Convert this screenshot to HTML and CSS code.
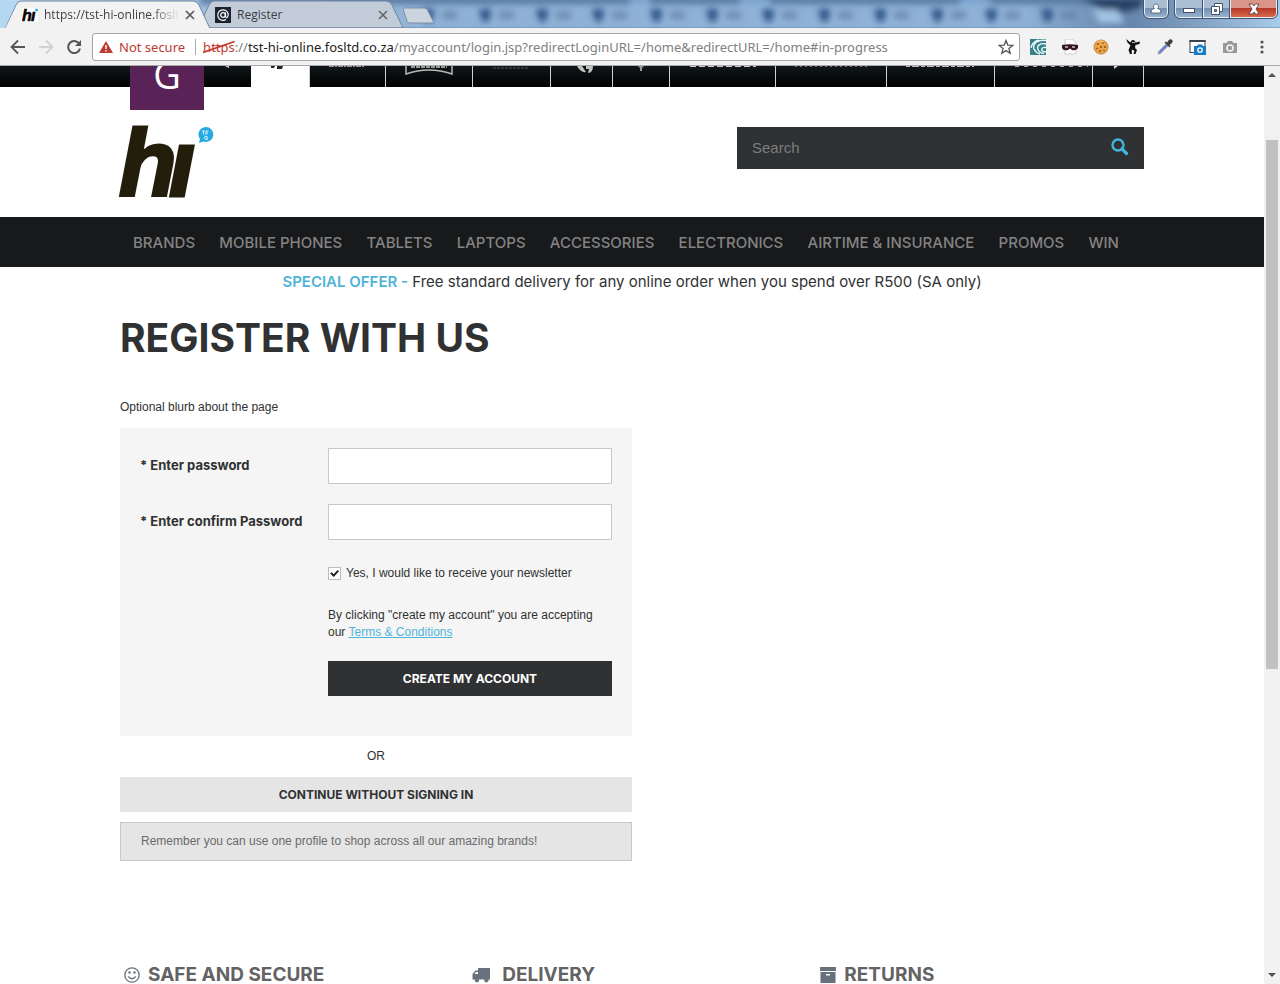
FILE: index.html
```html
<!DOCTYPE html>
<html lang="en">
<head>
<meta charset="utf-8">
<title>Register</title>
<link rel="stylesheet" href="styles.css">
</head>
<body>
<div class="titlebar">
  <svg class="glass" viewBox="0 0 1280 28" preserveAspectRatio="none" aria-hidden="true">
    <defs>
      <linearGradient id="sky" x1="0" x2="1" y1="0" y2="0">
        <stop offset="0" stop-color="#b9dcf5"/><stop offset=".15" stop-color="#a0bfe0"/><stop offset=".35" stop-color="#8fb1d6"/>
        <stop offset=".8" stop-color="#8fb1d6"/><stop offset=".88" stop-color="#6485aa"/><stop offset=".92" stop-color="#7897b9"/><stop offset="1" stop-color="#a8cbe9"/>
      </linearGradient>
      <filter id="soft" x="-20%" y="-50%" width="140%" height="200%"><feGaussianBlur stdDeviation="3"/></filter>
      <g id="ghost"><path d="M0 9h12v6l-3 7H4l-3-7z" fill="#30598b"/><path d="M20 11h15v8H20z" fill="#617fa2" opacity=".7"/></g>
    </defs>
    <rect width="1280" height="28" fill="url(#sky)"/>
    <g filter="url(#soft)">
      <path d="M200-4h960v8H200z" fill="#55779f"/>
      <path d="M630-2h20v6h-20zM740-2h30v6h-30zM960-2h30v6h-30z" fill="#7fa9d6"/>
      <path d="M1080-2h62v9l-28 8z" fill="#253f63"/>
      <use href="#ghost" x="422"/><use href="#ghost" x="479"/><use href="#ghost" x="536"/><use href="#ghost" x="592"/><use href="#ghost" x="650"/><use href="#ghost" x="706"/><use href="#ghost" x="762"/><use href="#ghost" x="818"/><use href="#ghost" x="874"/><use href="#ghost" x="931"/><use href="#ghost" x="985"/><use href="#ghost" x="1041"/>
      <path d="M1092 10h25l8 13h-25z" fill="#a4c4e5"/>
    </g>
    <path d="M198 28 209 5q2-4 5-4h172q4 0 6 4l11 23z" fill="#c2ccd8" stroke="#70859f"/>
    <path d="M0 28h5L16 5q2-4 5-4h172q4 0 6 4l11 23.500H0z" fill="#f2f2f2" stroke="#70859f"/>
    <path d="M0 28 5 28 17 1H0z" fill="#b4d7f2"/>
    <path d="m403 9 4 12q1 2 3 2h24l-6-12q-1-3-4-3h-19q-2 0-2 1z" fill="#ccd4dd" stroke="#7b8fa8"/>
    <path d="M210 28h1070" stroke="#6a83a1"/>
  </svg>
  <div class="tabs">
    <div class="tab">
      <svg width="16" height="14" viewBox="0 0 16 14" aria-hidden="true"><rect width="16" height="14" fill="#fff"/><g font-family="Liberation Sans" font-weight="bold" font-style="italic" font-size="16" stroke="#111" stroke-width=".6"><text x="0" y="13">h</text><text x="9" y="13">ı</text></g><circle cx="14.500" cy="2" r="1.500" fill="#2bb0e4"/></svg>
      <span class="tab-title faded">https://tst-hi-online.fosltd</span>
      <button class="plain" aria-label="Close tab"><svg width="10" height="10" viewBox="0 0 10 10"><path d="m1 1 8 8M9 1 1 9" stroke="#555" stroke-width="1.600"/></svg></button>
    </div>
    <div class="tab">
      <svg width="16" height="16" viewBox="0 0 16 16" aria-hidden="true"><rect width="16" height="16" fill="#1b2230"/><circle cx="8" cy="8" r="2.300" fill="none" stroke="#fff" stroke-width="1.300"/><path d="M10.500 5.500v4q.3 1.500 1.500 1 1.500-1 1.200-3.500A5.300 5.300 0 1 0 11 12.500" fill="none" stroke="#fff" stroke-width="1.200"/></svg>
      <span class="tab-title">Register</span>
      <button class="plain" aria-label="Close tab"><svg width="10" height="10" viewBox="0 0 10 10"><path d="m1 1 8 8M9 1 1 9" stroke="#666" stroke-width="1.600"/></svg></button>
    </div>
  </div>
  <div class="window-controls">
    <button class="wc profile" aria-label="Profile"><svg width="12" height="12" viewBox="0 0 12 12"><path d="M6 1a2.500 2.500 0 0 1 1.500 4.500c2.500.5 3.500 1.500 3.500 4.500H1c0-3 1-4 3.500-4.500A2.500 2.500 0 0 1 6 1z" fill="#fff" stroke="#3e5673" stroke-width=".8"/></svg></button>
    <div class="wc-group">
      <button class="wc min" aria-label="Minimize"><svg width="14" height="10" viewBox="0 0 14 10"><rect x="1.500" y="4.500" width="11" height="4" fill="#fff" stroke="#455268"/></svg></button>
      <button class="wc max" aria-label="Restore"><svg width="14" height="14" viewBox="0 0 14 14"><path d="M4.500 1.500h8v8h-8z" fill="#fff" stroke="#455268"/><path d="M1.500 4.500h8v8h-8z" fill="#fff" stroke="#455268"/><path d="M4.500 7.500h2v2h-2z" fill="#7e99b8" stroke="#455268"/></svg></button>
      <button class="wc close" aria-label="Close"><svg width="14" height="12" viewBox="0 0 14 12"><path d="m2 1h3.500L7 3l1.500-2H12L9 6l3 5H8.500L7 9l-1.500 2H2l3-5z" fill="#fff" stroke="#54333a" stroke-width=".8"/></svg></button>
    </div>
  </div>
</div>

<div class="toolbar">
  <div class="nav-buttons">
    <button class="plain" aria-label="Back"><svg width="16" height="16" viewBox="0 0 16 16"><path d="M15 8H2M8 1.500 1.500 8 8 14.500" fill="none" stroke="#555" stroke-width="1.800"/></svg></button>
    <button class="plain" aria-label="Forward"><svg width="16" height="16" viewBox="0 0 16 16"><path d="M1 8h13M8 1.500 14.500 8 8 14.500" fill="none" stroke="#d2d2d2" stroke-width="1.800"/></svg></button>
    <button class="plain" aria-label="Reload"><svg width="16" height="16" viewBox="0 0 16 16"><path d="M13.200 4.800A6 6 0 1 0 14 9.500" fill="none" stroke="#555" stroke-width="2"/><path d="M15 1v6H9z" fill="#555"/></svg></button>
  </div>
  <div class="address" role="textbox" aria-label="Address">
    <svg width="14" height="12" viewBox="0 0 14 12" aria-hidden="true"><path d="M7 0l7 12H0z" fill="#bd3b30"/><path d="M6.300 4h1.400v4H6.300zM6.300 9h1.400v1.400H6.300z" fill="#fff"/></svg>
    <span class="not-secure">Not secure</span>
    <span class="url"><span class="scheme">https<svg class="strike" viewBox="0 0 32 14" preserveAspectRatio="none" aria-hidden="true"><path d="M0 12.500 32 1.500" stroke="#c5392d" stroke-width="1.800"/></svg></span>://<span class="host">tst-hi-online.fosltd.co.za</span>/myaccount/login.jsp?redirectLoginURL=/home&amp;redirectURL=/home#in-progress</span>
    <button class="plain" aria-label="Bookmark"><svg width="16" height="16" viewBox="0 0 16 16"><path d="m8 1.500 1.800 4.600 4.900.3-3.800 3.100 1.300 4.800L8 11.600l-4.200 2.700 1.300-4.800-3.800-3.100 4.900-.3z" fill="none" stroke="#555" stroke-width="1.300"/></svg></button>
  </div>
  <div class="extensions">
    <svg width="16" height="16" viewBox="0 0 16 16"><rect width="16" height="16" fill="#36818c"/><path d="M16 1.500C8 0 2 5 4 10q2 4 6 5M16 5C10 3.500 6.500 7 8 10.500q1.500 3.500 6 4M16 8.500c-3-.5-5 1-4 3q1 1.500 4 1.500M9 1Q2 3 1 9" fill="none" stroke="#eef8fa" stroke-width="1.400"/></svg>
    <svg width="16" height="16" viewBox="0 0 16 16"><path d="M3 0h7l4 4v11H3z" fill="#fff" stroke="#ccc"/><path d="M0 6q8-1.500 16 0v3q-2 3-6 2L8 9.500 6 11q-5 1-6-2z" fill="#35171c"/><path d="M3 8h3M10 8h3" stroke="#d9bcc0" stroke-width="1.600"/></svg>
    <svg width="16" height="16" viewBox="0 0 16 16"><circle cx="8" cy="8" r="7" fill="#e9a348" stroke="#c98138"/><path d="M4 3q4-2 7 0" stroke="#f4bd70" stroke-width="1.500" fill="none"/><g fill="#7d491f"><circle cx="5" cy="5" r=".9"/><circle cx="10" cy="4" r=".8"/><circle cx="8" cy="8" r=".9"/><circle cx="4" cy="9.500" r=".8"/><circle cx="12" cy="8" r=".9"/><circle cx="7" cy="12" r=".9"/><circle cx="11" cy="11.500" r=".8"/></g></svg>
    <svg width="16" height="16" viewBox="0 0 16 16"><path d="m1 0 4.500 3.500q.5-3 3-2.500 2 .5 2 2.500l4.500-1-.5 2.500-4 1-.5 3 2 2-1.500 4H8.500l1-3-2-1.500-1 1.500.5 3H5l-1.500-4 2-4.500-3-3z" fill="#111"/><path d="M7 3.500h3" stroke="#e5e5e5" stroke-width=".8"/></svg>
    <svg width="16" height="16" viewBox="0 0 16 16"><path d="M1 15q0-2 1.500-3.500L9 5l2 2-6.500 6.500Q3 15 1 15z" fill="#7183d2" stroke="#9ba3b4"/><path d="m7.500 3.500 1-1 1.500 1L12 .8q2-1.300 3.200.2 1 1.500-.2 3L12.500 6l1 1.500-1 1z" fill="#3e4045"/></svg>
    <svg width="18" height="16" viewBox="0 0 18 16"><rect x="1" y="1.500" width="15" height="12" fill="#fff" stroke="#39434b"/><path d="M.5 1h16v2H.5z" fill="#39434b"/><path d="M5 7h3l1-1.500h4L14 7h3v9H5z" fill="#167bc8"/><circle cx="11" cy="11" r="2.200" fill="none" stroke="#fff" stroke-width="1.300"/></svg>
    <svg width="16" height="16" viewBox="0 0 16 16"><path d="M1 4h3.500L6 2h4l1.500 2H15v10H1z" fill="#999"/><circle cx="8" cy="9" r="3" fill="none" stroke="#f2f2f2" stroke-width="1.600"/></svg>
    <button class="plain" aria-label="Menu"><svg width="16" height="16" viewBox="0 0 16 16"><g fill="#555"><circle cx="8" cy="3" r="1.600"/><circle cx="8" cy="8" r="1.600"/><circle cx="8" cy="13" r="1.600"/></g></svg></button>
  </div>
</div>

<div class="viewport">
  <div class="page">
    <div class="brand-strip">
      <div class="container brand-row">
        <div class="group-tile">G</div>
        <div class="brand-cells">
          <div class="cell c-arrow"><svg width="58" height="21" viewBox="0 0 58 21"><path d="m32 0 4 2V0z" fill="#ddd"/></svg></div>
          <div class="cell c-active"><svg width="58" height="21" viewBox="0 0 58 21"><path d="M20 0h4l-1 2h-3zM26 0h6l-1 3h-5z" fill="#222"/></svg></div>
          <div class="cell c-76"><svg width="75" height="21" viewBox="0 0 75 21"><path d="M19 .5h36" stroke="#999" stroke-width="1" stroke-dasharray="5 1 2 1"/></svg></div>
          <div class="cell c-87"><svg width="86" height="21" viewBox="0 0 86 21"><path d="M20 0v8q23-8 46 0V0" fill="none" stroke="#b8b8b8" stroke-width="1.500"/><path d="M25 1h36" stroke="#999" stroke-width="2" stroke-dasharray="4 1"/></svg></div>
          <div class="cell c-78"><svg width="77" height="21" viewBox="0 0 77 21"><path d="M20 2h36" stroke="#555" stroke-width="1" stroke-dasharray="3 1"/></svg></div>
          <div class="cell c-62"><svg width="61" height="21" viewBox="0 0 61 21"><path d="M26 0h5l4 6q-5 1-9-6zM35 0h7q0 7-5 7l1-4h-3z" fill="#c2c2c2"/></svg></div>
          <div class="cell c-57"><svg width="56" height="21" viewBox="0 0 56 21"><path d="M25 0h6l-2 2v3h-2V2z" fill="#999"/></svg></div>
          <div class="cell c-106"><svg width="105" height="21" viewBox="0 0 105 21"><path d="M20 .5h66" stroke="#ccc" stroke-width="1" stroke-dasharray="6 3"/></svg></div>
          <div class="cell c-111"><svg width="110" height="21" viewBox="0 0 110 21"><path d="M19 .5h72" stroke="#777" stroke-width="1" stroke-dasharray="2 3"/></svg></div>
          <div class="cell c-108"><svg width="107" height="21" viewBox="0 0 107 21"><path d="M19 .5h68" stroke="#bbb" stroke-width="1" stroke-dasharray="4 2 7 2"/></svg></div>
          <div class="cell c-98"><svg width="97" height="21" viewBox="0 0 97 21"><path d="M20 .5h73" stroke="#aaa" stroke-width="1" stroke-dasharray="4 5"/></svg></div>
          <div class="cell c-51"><svg width="50" height="21" viewBox="0 0 50 21"><path d="M21 0h4l-4 3z" fill="#ddd"/></svg></div>
        </div>
      </div>
    </div>

    <header class="container site-header">
      <a class="logo" href="#" aria-label="hi home">
        <svg width="94" height="70" viewBox="0 0 94 70">
          <g font-family="Liberation Sans" font-weight="bold" font-style="italic" font-size="94" fill="#231e0c" stroke="#231e0c" stroke-width="3"><text x="-1" y="68.500">h</text><text x="49" y="68.500">ı</text></g>
          <path d="M85.500 0a7.500 7.500 0 1 1-2 14.600L79 16l1-4A7.500 7.500 0 0 1 85.500 0z" fill="#27aae1"/>
          <path d="M82 4h3M83.500 4v3.500M86 8V4h2.500M86 6h2M87.500 9.500q-3-1-3.500 1.500.5 2 3.500 1.300V11H86" fill="none" stroke="#fff" stroke-width=".8"/>
        </svg>
      </a>
      <form class="search" role="search">
        <input type="text" aria-label="Search" placeholder="Search">
        <button class="plain" type="button" aria-label="Submit search"><svg width="18" height="22" viewBox="0 0 18 22"><circle cx="7" cy="8" r="5.500" fill="none" stroke="#41b4dc" stroke-width="2.400"/><path d="m11 12 4.500 4.500" stroke="#41b4dc" stroke-width="3.200" stroke-linecap="round"/></svg></button>
      </form>
    </header>

    <nav class="site-nav">
      <div class="container nav-links">
        <a href="#">BRANDS</a><a href="#">MOBILE PHONES</a><a href="#">TABLETS</a><a href="#">LAPTOPS</a><a href="#">ACCESSORIES</a><a href="#">ELECTRONICS</a><a href="#">AIRTIME &amp; INSURANCE</a><a href="#">PROMOS</a><a href="#">WIN</a>
      </div>
    </nav>

    <p class="promo"><strong>SPECIAL OFFER -</strong> Free standard delivery for any online order when you spend over R500 (SA only)</p>

    <main class="container">
      <h1>REGISTER WITH US</h1>
      <p class="blurb">Optional blurb about the page</p>
      <div class="column">
        <form class="panel">
          <div class="field"><label for="pw">* Enter password</label><input id="pw" type="password"></div>
          <div class="field"><label for="pw2">* Enter confirm Password</label><input id="pw2" type="password"></div>
          <div class="actions">
            <label class="check"><input type="checkbox" checked>Yes, I would like to receive your newsletter</label>
            <p class="terms">By clicking "create my account" you are accepting our <a href="#">Terms &amp; Conditions</a></p>
            <button class="btn dark" type="button">CREATE MY ACCOUNT</button>
          </div>
        </form>
        <p class="or">OR</p>
        <button class="btn light" type="button">CONTINUE WITHOUT SIGNING IN</button>
        <p class="note">Remember you can use one profile to shop across all our amazing brands!</p>
      </div>
    </main>

    <footer class="container site-footer">
      <h2><svg width="16" height="16" viewBox="0 0 16 16" aria-hidden="true"><circle cx="8" cy="8" r="7.200" fill="none" stroke="#68717c" stroke-width="1.300"/><circle cx="5.500" cy="5.500" r="1.200" fill="#68717c"/><circle cx="10.500" cy="5.500" r="1.200" fill="#68717c"/><path d="M4.300 9.500q3.700 4.500 7.400 0" fill="none" stroke="#68717c" stroke-width="1.300"/></svg>SAFE AND SECURE</h2>
      <h2><svg width="22" height="16" viewBox="0 0 22 16" aria-hidden="true"><path d="M6 1h12v11.500h-1.500a2.200 2.200 0 1 1-4.200 0H7a2.200 2.200 0 1 1-4.200 0H.5V7l3-3.500H6zM2.500 7H6V5H4z" fill="#68717c" fill-rule="evenodd"/></svg>DELIVERY</h2>
      <h2><svg width="16" height="16" viewBox="0 0 16 16" aria-hidden="true"><path d="M0 0h16v4H0zM.5 5h15v11H.500zM6 7v1.500h4V7z" fill="#68717c" fill-rule="evenodd"/></svg>RETURNS</h2>
    </footer>
  </div>
  <div class="scrollbar" aria-hidden="true">
    <svg width="8" height="18" viewBox="0 0 8 18"><path d="m0 11 4-4 4 4z" fill="#505050"/></svg>
    <div class="track"><div class="thumb"></div></div>
    <svg width="8" height="18" viewBox="0 0 8 18"><path d="m0 7 4 4 4-4z" fill="#505050"/></svg>
  </div>
</div>
</body>
</html>
```
FILE: styles.css
```css
* { box-sizing: border-box; }
body {
  margin: 0;
  height: 100vh;
  display: flex;
  flex-direction: column;
  overflow: hidden;
  background: #fff;
  color: #303132;
  font: 12px/18px "Liberation Sans", Arial, sans-serif;
}
p, h1, h2 { margin: 0; }
svg { display: block; flex: none; }
button { font: inherit; cursor: pointer; }
.plain { border: 0; padding: 0; background: none; }

/* Browser frame */
.titlebar {
  position: relative;
  display: flex;
  justify-content: space-between;
  height: 28px;
  flex: none;
  font: 12px/16px "Open Sans", "Noto Sans", sans-serif;
}
.glass { position: absolute; inset: 0; width: 100%; height: 100%; }
.tabs { position: relative; display: flex; gap: 20px; padding: 2px 0 0 22px; }
.tab { display: flex; align-items: center; gap: 6px; width: 173px; height: 26px; color: #3b3f45; }
.tab-title { flex: 1; overflow: hidden; white-space: nowrap; }
.faded { mask-image: linear-gradient(to right, #000 80%, transparent); }
.window-controls { position: relative; display: flex; gap: 7px; padding-right: 3px; align-items: flex-start; }
.wc-group { display: flex; }
.wc {
  display: flex;
  align-items: center;
  justify-content: center;
  height: 18px;
  padding: 0;
  border: 1px solid #e3edf6;
  border-top: 0;
  outline: 1px solid #3f5573;
  background: linear-gradient(#a9bdd3 45%, #7590b0 50%, #96b2cf);
}
.profile { width: 24px; border-radius: 0 0 5px 5px; }
.min { width: 28px; border-radius: 0 0 0 5px; }
.max { width: 27px; }
.close { width: 47px; border-radius: 0 0 5px 0; background: linear-gradient(#d99587 45%, #b7392a 50%, #d66b4a); }

.toolbar {
  display: flex;
  align-items: center;
  height: 38px;
  flex: none;
  padding: 0 10px;
  background: #f2f2f2;
  border-bottom: 1px solid #a8a8a8;
}
.nav-buttons { display: flex; gap: 12px; width: 82px; }
.address {
  display: flex;
  align-items: center;
  flex: 1;
  min-width: 0;
  height: 28px;
  padding: 0 5px 0 6px;
  background: #fff;
  border: 1px solid #a5a5a5;
  border-radius: 3px;
  font: 13px/20px "Noto Sans", "Open Sans", sans-serif;
}
.not-secure { margin-left: 6px; padding-right: 10px; color: #bd3b30; border-right: 1px solid #aaa; line-height: 16px; white-space: nowrap; }
.url { flex: 1; min-width: 0; margin-left: 7px; overflow: hidden; white-space: nowrap; color: #808080; }
.scheme { position: relative; color: #c5392d; }
.strike { position: absolute; left: 0; top: 2px; width: 100%; height: 14px; }
.host { color: #222; }
.extensions { display: flex; justify-content: space-between; align-items: center; width: 250px; padding-left: 10px; }

/* Page viewport */
.viewport { display: flex; flex: 1; min-height: 0; }
.page { flex: 1; min-width: 0; overflow: hidden; }
.container { max-width: 1024px; margin: 0 auto; }
.scrollbar { display: flex; flex-direction: column; align-items: center; width: 16px; background: #f1f1f1; }
.track { flex: 1; width: 12px; padding-top: 56px; }
.thumb { height: 64%; background: #c1c1c1; }

.brand-strip { height: 21px; background: linear-gradient(#101719, #000); }
.brand-row { position: relative; height: 21px; display: flex; justify-content: flex-end; }
.group-tile {
  position: absolute;
  left: 10px;
  top: 0;
  width: 74px;
  height: 44px;
  overflow: hidden;
  background: #5a2358;
  color: #fff;
  text-align: center;
  font: 400 38px/16px "Open Sans", sans-serif;
}
.brand-cells { display: flex; }
.cell { border-right: 1px solid #d0d0d0; overflow: hidden; }
.c-arrow { width: 58px; border-right: 0; }
.c-active { width: 59px; background: #fff; }
.c-76 { width: 76px; }
.c-87 { width: 87px; }
.c-78 { width: 78px; }
.c-62 { width: 62px; }
.c-57 { width: 57px; }
.c-106 { width: 106px; }
.c-111 { width: 111px; }
.c-108 { width: 108px; }
.c-98 { width: 98px; }
.c-51 { width: 51px; }

.site-header { display: flex; justify-content: space-between; align-items: flex-start; padding: 40px 0 20px; }
.logo svg { overflow: visible; }
.search { display: flex; align-items: center; width: 407px; height: 42px; padding: 0 15px; background: #303132; }
.search input { flex: 1; min-width: 0; padding: 0; border: 0; outline: 0; background: none; color: #ccc; font: 15px/20px "Liberation Sans", Arial, sans-serif; }
.search input::placeholder { color: #7b7d80; opacity: 1; }

.site-nav { background: #18191b; }
.nav-links { display: flex; justify-content: space-between; align-items: center; height: 50px; padding: 2px 25px 0 13px; }
.nav-links a { color: #838383; text-decoration: none; white-space: nowrap; font: 500 15px/20px Inter, sans-serif; }
.promo { padding: 5px 0; text-align: center; font: 400 15px/20px Inter, sans-serif; }
.promo strong { color: #4fb3d9; font-weight: 600; }

h1 { padding: 17px 0 36px; font: 700 39px/48px Inter, sans-serif; }
.blurb { padding-bottom: 12px; }
.column { max-width: 512px; }
.panel { display: flex; flex-direction: column; gap: 20px; padding: 20px 20px 40px; background: #f5f5f5; }
.field { display: grid; grid-template-columns: 1fr 284px; }
.field label { padding-top: 7px; font: 700 13px/20px Inter, sans-serif; }
.field input { width: 100%; height: 36px; border: 1px solid #c8c8c8; background: #fff; }
.actions { width: 284px; margin-left: auto; display: flex; flex-direction: column; line-height: 17px; }
.check { display: flex; align-items: center; gap: 5px; height: 47px; padding-bottom: 22px; padding-top: 2px; white-space: nowrap; }
.check input {
  appearance: none;
  width: 13px;
  height: 13px;
  margin: 0;
  border: 1px solid #bdbdbd;
  background: #fff;
  display: grid;
  place-items: center;
}
.check input:checked::before { content: ""; width: 9px; height: 7px; background: #222; clip-path: polygon(0 50%, 20% 32%, 40% 60%, 84% 0, 100% 18%, 42% 100%); }
.terms { padding-bottom: 20px; }
.terms a { color: #4fb3d9; }
.btn { display: block; width: 100%; height: 35px; border: 0; padding: 0; font: 700 12px/16px Inter, sans-serif; }
.dark { background: #303132; color: #fff; }
.light { background: #e5e5e5; color: #303132; }
.or { padding: 11px 0 12px; text-align: center; }
.note { margin-top: 10px; padding: 9px 20px 10px; border: 1px solid #c8c8c8; background: #e5e5e5; color: #6a6a6a; }

.site-footer { display: grid; grid-template-columns: repeat(3, 34%); margin-top: 104px; }
.site-footer h2 { display: flex; align-items: center; gap: 8px; padding-left: 4px; color: #636363; font: 700 19px/20px Inter, sans-serif; }
```
